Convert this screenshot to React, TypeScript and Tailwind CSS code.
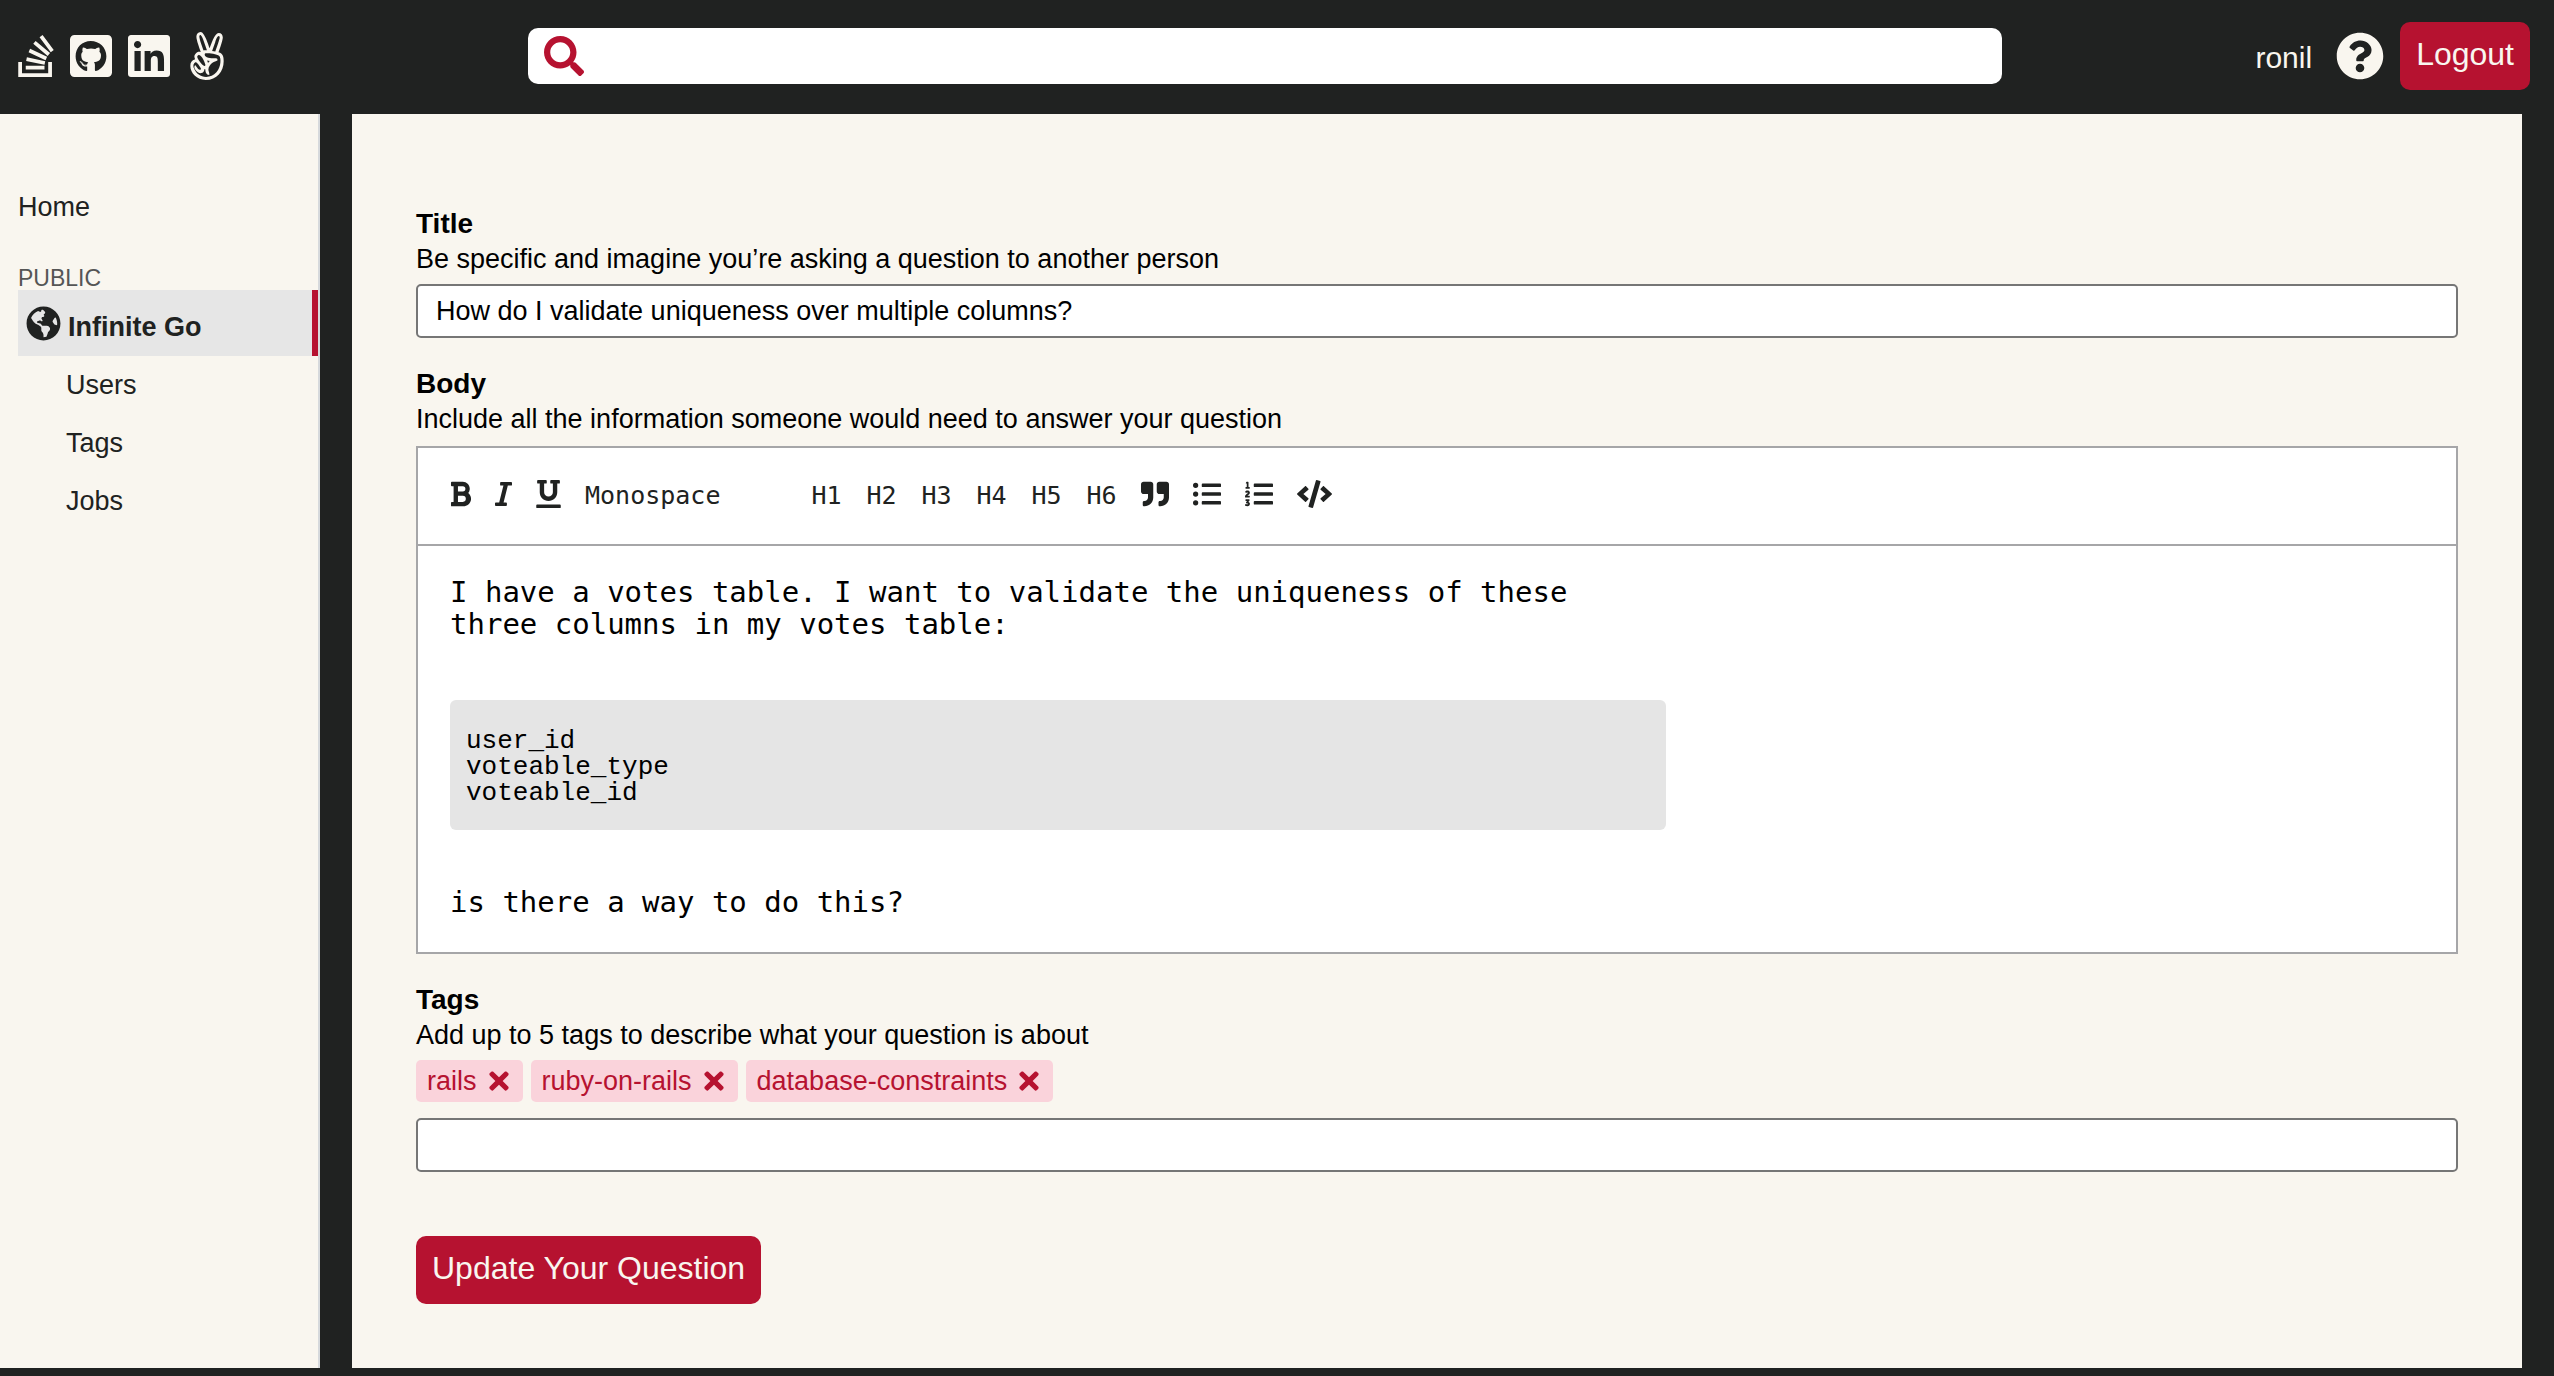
import { useState } from "react";
import type { ReactNode } from "react";
import {
  FaStackOverflow,
  FaGithubSquare,
  FaLinkedin,
  FaAngellist,
  FaSearch,
  FaQuestionCircle,
  FaGlobeAmericas,
  FaBold,
  FaItalic,
  FaUnderline,
  FaQuoteRight,
  FaListUl,
  FaListOl,
  FaCode,
  FaTimes,
} from "react-icons/fa";

function Header() {
  return (
    <header className="flex h-[114px] shrink-0 items-center justify-between bg-[#202221] pl-[18px] pr-6 pb-[2px] text-[#f9f6ef]">
      <nav aria-label="Social links" className="flex w-[510px] items-center gap-4">
        <a href="#stack-overflow" aria-label="Stack Overflow">
          <FaStackOverflow className="h-12 w-9" />
        </a>
        <a href="#github" aria-label="GitHub">
          <FaGithubSquare className="h-12 w-[42px]" />
        </a>
        <a href="#linkedin" aria-label="LinkedIn">
          <FaLinkedin className="h-12 w-[42px]" />
        </a>
        <a href="#angellist" aria-label="AngelList">
          <FaAngellist className="h-12 w-[42px]" />
        </a>
      </nav>
      <form
        role="search"
        onSubmit={(e) => e.preventDefault()}
        className="flex h-14 max-w-[1474px] flex-1 items-center rounded-[10px] bg-white px-4"
      >
        <FaSearch className="size-10 shrink-0 text-[#b61230]" />
        <input
          type="search"
          aria-label="Search"
          className="ml-4 h-full min-w-0 flex-1 bg-transparent text-[28px] text-black outline-none"
        />
      </form>
      <div className="flex w-[528px] items-center justify-end">
        <a href="#profile" className="mr-6 pt-1 text-[30px] leading-[34px]">
          ronil
        </a>
        <a href="#help" aria-label="Help" className="mr-4">
          <FaQuestionCircle className="size-12" />
        </a>
        <button
          type="button"
          className="rounded-[10px] bg-[#b61230] px-4 pb-[18px] pt-[14px] text-[32px] leading-9"
        >
          Logout
        </button>
      </div>
    </header>
  );
}

function Sidebar() {
  return (
    <aside className="w-80 shrink-0 border-r-2 border-[#d6d9dc] bg-[#f9f6ef] pl-[18px] pt-[77px] text-[27px] leading-8 text-[#202221]">
      <nav aria-label="Main" className="flex flex-col">
        <a href="#home">Home</a>
        <h2 className="mt-[43px] text-[23px] leading-6 text-[#555555]">PUBLIC</h2>
        <a
          href="#questions"
          aria-current="page"
          className="flex h-[66px] items-center gap-[7px] border-r-[6px] border-[#b61230] bg-[#e6e6e6] pl-2 font-bold"
        >
          <FaGlobeAmericas className="size-[35px]" />
          <span className="pt-2">Infinite Go</span>
        </a>
        <ul className="flex flex-col gap-[26px] pl-12 pt-[13px]">
          <li>
            <a href="#users">Users</a>
          </li>
          <li>
            <a href="#tags">Tags</a>
          </li>
          <li>
            <a href="#jobs">Jobs</a>
          </li>
        </ul>
      </nav>
    </aside>
  );
}

function FieldLabel({ id, title, hint }: { id: string; title: string; hint: string }) {
  return (
    <label htmlFor={id} className="block text-black">
      <span className="block text-[28px] font-bold leading-9">{title}</span>
      <span className="block text-[27px] leading-[34px]">{hint}</span>
    </label>
  );
}

function Tool({ label, children }: { label: string; children: ReactNode }) {
  return (
    <button type="button" aria-label={label} className="flex h-8 items-center">
      {children}
    </button>
  );
}

const headings = ["H1", "H2", "H3", "H4", "H5", "H6"];

function Toolbar() {
  return (
    <div
      role="toolbar"
      aria-label="Formatting"
      className="flex items-start gap-6 border-b-2 border-[#a6a6a8] px-8 pb-8 pt-[30px] text-[#202221]"
    >
      <Tool label="Bold">
        <FaBold className="h-7 w-[21px]" />
      </Tool>
      <Tool label="Italic">
        <FaItalic className="h-7 w-[17px]" />
      </Tool>
      <Tool label="Underline">
        <FaUnderline className="h-7 w-[25px]" />
      </Tool>
      <select
        aria-label="Font"
        className="w-[202px] appearance-none bg-transparent pt-[2px] font-['DejaVu_Sans_Mono',monospace] text-[25px] leading-8"
      >
        <option>Monospace</option>
      </select>
      {headings.map((h) => (
        <button
          key={h}
          type="button"
          className="w-[31px] pt-[2px] font-['DejaVu_Sans_Mono',monospace] text-[25px] leading-8"
        >
          {h}
        </button>
      ))}
      <Tool label="Quote">
        <FaQuoteRight className="size-7" />
      </Tool>
      <Tool label="Bulleted list">
        <FaListUl className="size-7" />
      </Tool>
      <Tool label="Numbered list">
        <FaListOl className="size-7" />
      </Tool>
      <Tool label="Code">
        <FaCode className="h-7 w-[35px]" />
      </Tool>
    </div>
  );
}

function Editor() {
  return (
    <div className="border-2 border-[#a6a6a8] bg-white">
      <Toolbar />
      <div
        id="body"
        role="textbox"
        aria-multiline="true"
        aria-label="Body"
        contentEditable
        suppressContentEditableWarning
        className="px-8 pb-[34px] pt-[30px] font-['DejaVu_Sans_Mono',monospace] text-[29px] leading-8 text-black outline-none"
      >
        <p className="max-w-[1216px]">
          I have a votes table. I want to validate the uniqueness of these
          <br />
          three columns in my votes table:
        </p>
        <pre className="mb-14 mt-[60px] max-w-[1216px] rounded-[6px] bg-[#e5e5e5] px-4 pb-6 pt-7 font-['Liberation_Mono',monospace] text-[26px] leading-[26px]">
          <code className="block font-['Liberation_Mono',monospace]">
            {"user_id\nvoteable_type\nvoteable_id"}
          </code>
        </pre>
        <p>is there a way to do this?</p>
      </div>
    </div>
  );
}

function Tags() {
  const [tags, setTags] = useState(["rails", "ruby-on-rails", "database-constraints"]);
  return (
    <ul className="flex gap-2">
      {tags.map((tag) => (
        <li
          key={tag}
          className="flex h-[42px] items-center gap-3 rounded-[5px] bg-[#fad3db] pl-[11px] pr-[14px] text-[27px] leading-8 text-[#b61230]"
        >
          {tag}
          <button
            type="button"
            aria-label={`Remove ${tag}`}
            onClick={() => setTags(tags.filter((t) => t !== tag))}
          >
            <FaTimes className="h-7 w-5" />
          </button>
        </li>
      ))}
    </ul>
  );
}

const inputClass =
  "block h-[54px] w-full rounded-[5px] border-2 border-[#767676] bg-white px-[18px] text-[27px] text-black outline-none";

export default function App() {
  return (
    <div className="flex min-h-screen flex-col bg-[#202221] font-['Liberation_Sans',Arial,sans-serif]">
      <Header />
      <div className="flex flex-1 pb-2">
        <Sidebar />
        <main className="ml-8 mr-8 min-w-0 flex-1 bg-[#f9f6ef] px-16 pb-16 pt-[92px]">
          <form onSubmit={(e) => e.preventDefault()}>
            <FieldLabel
              id="title"
              title="Title"
              hint="Be specific and imagine you’re asking a question to another person"
            />
            <input
              id="title"
              type="text"
              defaultValue="How do I validate uniqueness over multiple columns?"
              className={`mt-2 ${inputClass}`}
            />
            <div className="mb-[10px] mt-7">
              <FieldLabel
                id="body"
                title="Body"
                hint="Include all the information someone would need to answer your question"
              />
            </div>
            <Editor />
            <div className="mb-2 mt-7">
              <FieldLabel
                id="tags"
                title="Tags"
                hint="Add up to 5 tags to describe what your question is about"
              />
            </div>
            <Tags />
            <input id="tags" type="text" className={`mt-4 ${inputClass}`} />
            <button
              type="submit"
              className="mt-16 block rounded-[10px] bg-[#b61230] px-4 pb-[18px] pt-[14px] text-[32px] leading-9 text-[#f9f6ef]"
            >
              Update Your Question
            </button>
          </form>
        </main>
      </div>
    </div>
  );
}
